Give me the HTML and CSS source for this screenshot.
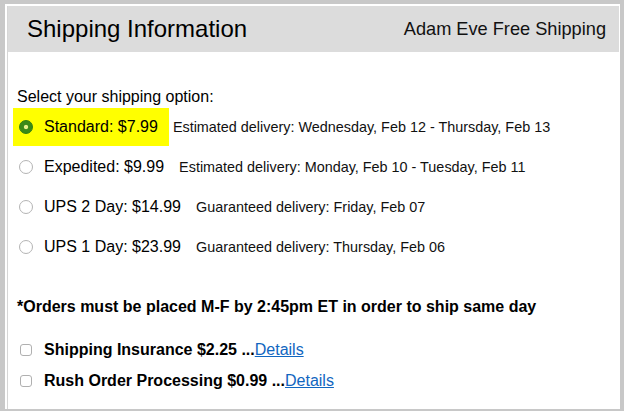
FILE: index.html
```html
<!DOCTYPE html>
<html lang="en">
<head>
    <meta charset="UTF-8">
    <meta name="viewport" content="width=device-width, initial-scale=1.0">
    <title>Shipping Information</title>
    <link rel="stylesheet" href="styles.css">
</head>
<body>
    <div class="frame">
        <div class="panel">
            <!-- En-tête -->
            <div class="header">
                <h2 class="title">Shipping Information</h2>
                <span class="promo">Adam Eve Free Shipping</span>
            </div>

            <div class="content">
                <p class="prompt">Select your shipping option:</p>

                <!-- Options de livraison -->
                <div class="options">
                    <div class="option">
                        <label class="choice selected">
                            <input type="radio" name="ship" checked>
                            <span>Standard: $7.99</span>
                        </label>
                        <span class="delivery">Estimated delivery: Wednesday, Feb 12 - Thursday, Feb 13</span>
                    </div>
                    <div class="option">
                        <label class="choice">
                            <input type="radio" name="ship">
                            <span>Expedited: $9.99</span>
                        </label>
                        <span class="delivery">Estimated delivery: Monday, Feb 10 - Tuesday, Feb 11</span>
                    </div>
                    <div class="option">
                        <label class="choice">
                            <input type="radio" name="ship">
                            <span>UPS 2 Day: $14.99</span>
                        </label>
                        <span class="delivery">Guaranteed delivery: Friday, Feb 07</span>
                    </div>
                    <div class="option">
                        <label class="choice">
                            <input type="radio" name="ship">
                            <span>UPS 1 Day: $23.99</span>
                        </label>
                        <span class="delivery">Guaranteed delivery: Thursday, Feb 06</span>
                    </div>
                </div>

                <p class="notice">*Orders must be placed M-F by 2:45pm ET in order to ship same day</p>

                <!-- Options supplémentaires -->
                <div class="extras">
                    <label class="extra">
                        <input type="checkbox">
                        <span><b>Shipping Insurance $2.25 ...</b><a href="#">Details</a></span>
                    </label>
                    <label class="extra">
                        <input type="checkbox">
                        <span><b>Rush Order Processing $0.99 ...</b><a href="#">Details</a></span>
                    </label>
                </div>
            </div>
        </div>
    </div>
</body>
</html>
```

FILE: styles.css
```css
:root {
  --frame: #c8c8c8;
  --header: #dcdcdc;
  --highlight: #ffff00;
  --link: #1166c0;
}

html, body {
  margin: 0;
  height: 100%;
}

body {
  background: var(--frame);
  font-family: "Liberation Sans", Arial, sans-serif;
  color: #000;
}

/* Cadre blanc */
.frame {
  margin: 4px 4px 0 5px;
  height: 405px;
  background: #fff;
  padding-top: 2px;
  box-sizing: border-box;
}

.panel {
  margin: 0 1px 0 2px;
  height: 100%;
  border-left: 1px solid #d6d6d6;
}

.header {
  height: 46px;
  background: var(--header);
  display: flex;
  align-items: center;
  justify-content: space-between;
  padding: 0 13px 0 19px;
}

.title {
  margin: 0;
  font-size: 24px;
  font-weight: normal;
}

.promo {
  font-size: 18.2px;
  color: #111;
}

.content {
  padding: 0 9px;
}

.prompt {
  margin: 35px 0 0;
  font-size: 16px;
  line-height: 20px;
}

.options {
  margin-left: -4px;
}

.option {
  height: 40px;
  display: flex;
  align-items: center;
}

.choice {
  height: 38px;
  display: inline-flex;
  align-items: center;
  gap: 11px;
  padding: 0 11px 0 6px;
  font-size: 16px;
  cursor: pointer;
}

.choice.selected {
  background: var(--highlight);
}

.choice input {
  -webkit-appearance: none;
  appearance: none;
  width: 14px;
  height: 14px;
  margin: 0;
  border: 1px solid #b4b4b4;
  border-radius: 50%;
  background: #fff;
  box-sizing: border-box;
}

.choice input:checked {
  border-color: #2f7d12;
  background: radial-gradient(circle, #e6f08c 0, #e6f08c 1.7px, #3a8a18 2.6px);
}

.delivery {
  margin-left: 4px;
  font-size: 14.4px;
  color: #111;
}

.notice {
  margin: 30px 0 0;
  font-size: 16px;
  line-height: 20px;
  font-weight: bold;
}

.extras {
  margin-top: 17px;
}

.extra {
  height: 31px;
  display: flex;
  align-items: center;
  gap: 12px;
  font-size: 16px;
}

.extra input {
  -webkit-appearance: none;
  appearance: none;
  width: 12px;
  height: 12px;
  margin: 0 0 0 3px;
  border: 1px solid #b0b0b0;
  border-radius: 3px;
  background: #fff;
  box-sizing: border-box;
}

.extra a {
  color: var(--link);
  text-decoration: underline;
}
```
